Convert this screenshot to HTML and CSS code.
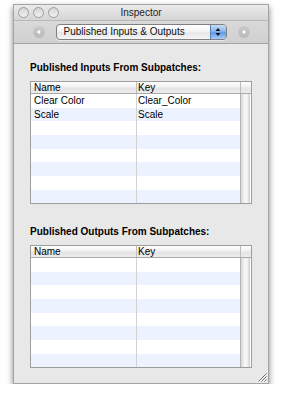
FILE: index.html
```html
<!DOCTYPE html>
<html lang="en">
<head>
    <meta charset="UTF-8">
    <meta name="viewport" content="width=device-width, initial-scale=1.0">
    <title>Inspector</title>
    <link rel="stylesheet" href="styles.css">
</head>
<body>

    <div class="window">
        <div class="titlebar">
            <div class="lights">
                <span class="light"></span>
                <span class="light"></span>
                <span class="light"></span>
            </div>
            <span class="title">Inspector</span>
        </div>

        <div class="toolbar">
            <span class="nav">
                <svg width="12" height="12" viewBox="0 0 12 12"><polygon points="3.6,6 7.2,3.8 7.2,8.2" fill="#fff"/></svg>
            </span>
            <div class="popup">
                <span class="popup-label">Published Inputs &amp; Outputs</span>
                <span class="stepper">
                    <svg width="14" height="14" viewBox="0 0 14 14">
                        <polygon points="7,3 4.6,6 9.4,6" fill="#111"/>
                        <polygon points="4.6,8 9.4,8 7,11" fill="#111"/>
                    </svg>
                </span>
            </div>
            <span class="nav">
                <svg width="12" height="12" viewBox="0 0 12 12"><polygon points="8.4,6 4.8,3.8 4.8,8.2" fill="#fff"/></svg>
            </span>
        </div>

        <div class="content">
            <h2 class="section-title">Published Inputs From Subpatches:</h2>
            <div class="table">
                <div class="table-head">
                    <span class="head-cell name">Name</span>
                    <span class="head-cell key">Key</span>
                    <span class="corner"></span>
                </div>
                <div class="table-body">
                    <div class="rows" id="inputList"></div>
                    <div class="scroller"></div>
                </div>
            </div>

            <h2 class="section-title second">Published Outputs From Subpatches:</h2>
            <div class="table">
                <div class="table-head">
                    <span class="head-cell name">Name</span>
                    <span class="head-cell key">Key</span>
                    <span class="corner"></span>
                </div>
                <div class="table-body">
                    <div class="rows" id="outputList"></div>
                    <div class="scroller"></div>
                </div>
            </div>
        </div>

        <svg class="grip" width="10" height="10" viewBox="0 0 10 10">
            <path d="M9.5 1.5 L1.5 9.5 M9.5 4.5 L4.5 9.5 M9.5 7.5 L7.5 9.5" stroke="#6f6f6f" stroke-width="1"/>
            <path d="M9.5 2.5 L2.5 9.5 M9.5 5.5 L5.5 9.5 M9.5 8.5 L8.5 9.5" stroke="#fafafa" stroke-width="1"/>
        </svg>
    </div>

    <script>
        // Published ports of the selected patch
        const inputs = [
            { name: "Clear Color", key: "Clear_Color" },
            { name: "Scale", key: "Scale" }
        ];
        const outputs = [];

        // Fill a table with its ports, padded with empty striped rows
        function fillRows(listId, ports) {
            const list = document.getElementById(listId);
            for (let i = 0; i < 8; i++) {
                const port = ports[i] || { name: "", key: "" };
                const row = document.createElement("div");
                row.className = "row";
                row.innerHTML = `<span class="cell name">${port.name}</span><span class="cell key">${port.key}</span>`;
                list.appendChild(row);
            }
        }

        fillRows("inputList", inputs);
        fillRows("outputList", outputs);
    </script>

</body>
</html>
```

FILE: styles.css
```css
body {
    margin: 0;
    background-color: #fff;
    font-family: "Liberation Sans", Arial, sans-serif;
    font-size: 10px;
    color: #000;
}

.window {
    position: relative;
    width: 254px;
    margin: 4px 0 0 13px;
    border: 1px solid #a4a4a4;
    background-color: #e8e8e8;
    box-shadow: 0 3px 6px rgba(0, 0, 0, 0.5);
}

/* title bar */
.titlebar {
    display: grid;
    grid-template-columns: 1fr auto 1fr;
    align-items: center;
    height: 15px;
    background: linear-gradient(#ebebeb, #d5d5d5);
    border-bottom: 1px solid #b9b9b9;
}

.lights {
    display: flex;
    gap: 4px;
    padding-left: 4px;
}

.light {
    width: 11px;
    height: 11px;
    box-sizing: border-box;
    border-radius: 50%;
    border: 1px solid #9c9c9c;
    background: linear-gradient(#d4d4d4, #f2f2f2);
}

.title {
    color: #222;
    line-height: 15px;
}

/* toolbar */
.toolbar {
    display: flex;
    justify-content: center;
    align-items: center;
    gap: 11px;
    height: 22px;
    background: linear-gradient(#d9d9d9, #d0d0d0);
    border-bottom: 1px solid #a3a3a3;
}

.nav {
    display: flex;
    width: 12px;
    height: 12px;
    border-radius: 50%;
    background: linear-gradient(#c9c9c9, #bababa);
}

.popup {
    display: flex;
    align-items: center;
    width: 171px;
    height: 16px;
    box-sizing: border-box;
    border: 1px solid #7f7f7f;
    border-radius: 4px;
    background: linear-gradient(#ffffff, #f3f3f3 50%, #e6e6e6 55%, #f6f6f6);
    box-shadow: 0 1px 0 rgba(255, 255, 255, 0.5);
}

.popup-label {
    flex: 1;
    padding-left: 7px;
    line-height: 14px;
    color: #111;
}

.stepper {
    display: flex;
    align-items: center;
    justify-content: center;
    width: 15px;
    height: 14px;
    border-left: 1px solid #5a7fb8;
    border-radius: 0 3px 3px 0;
    background: linear-gradient(#c6dcf7, #8cb6ec 45%, #5f98e6 55%, #a9cdf6);
}

/* inspector content */
.content {
    padding: 18px 16px 15px;
}

.section-title {
    margin: 0 0 7px;
    font-size: 10px;
    font-weight: bold;
    line-height: 12px;
}

.section-title.second {
    margin-top: 22px;
}

.table {
    height: 123px;
    box-sizing: border-box;
    border: 1px solid #9d9d9d;
    background-color: #fff;
}

.table-head {
    display: flex;
    height: 11px;
    border-bottom: 1px solid #a9a9a9;
    background: linear-gradient(#fefefe, #f1f1f1 45%, #e4e4e4 55%, #ececec);
}

.head-cell {
    box-sizing: border-box;
    line-height: 11px;
}

.head-cell.name,
.cell.name {
    width: 106px;
    padding-left: 3px;
}

.head-cell.name {
    border-right: 1px solid #bdbdbd;
}

.head-cell.key,
.cell.key {
    width: 103px;
    padding-left: 1px;
}

.corner {
    width: 10px;
    box-sizing: border-box;
    border-left: 1px solid #bdbdbd;
}

.table-body {
    display: flex;
    height: 109px;
}

.rows {
    overflow: hidden;
}

.row {
    display: flex;
    height: 13.7px;
}

.row:nth-child(even) {
    background-color: #edf3fe;
}

.cell {
    box-sizing: border-box;
    line-height: 13.7px;
    white-space: nowrap;
}

.cell.name {
    border-right: 1px solid #d2d2d2;
}

.scroller {
    width: 10px;
    box-sizing: border-box;
    border-left: 1px solid #b5b5b5;
    background: linear-gradient(to right, #d8d8d8, #f8f8f8 45%, #f1f1f1 70%, #cdcdcd);
}

.grip {
    position: absolute;
    right: 1px;
    bottom: 1px;
}
```
